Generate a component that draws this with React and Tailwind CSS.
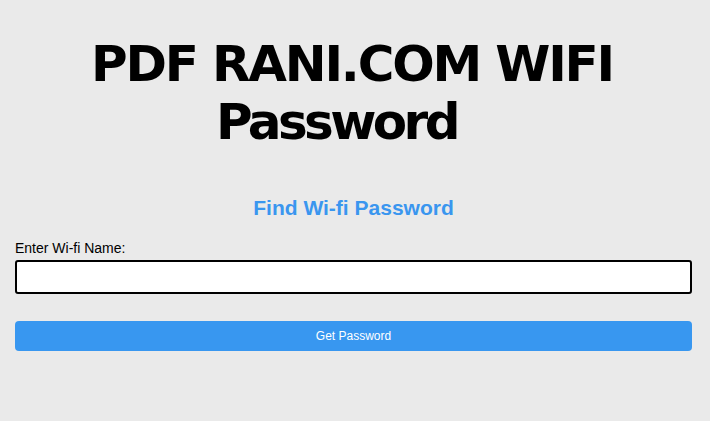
import React, { useState } from 'react';

export default function App() {
  const [name, setName] = useState('');

  return (
    <div className="min-h-[421px] w-full bg-[#eaeaea] px-[15px] pr-[18px] pt-[35px] font-['Liberation_Sans',Arial,sans-serif]">
      <h1 className="text-center font-['DejaVu_Sans',Verdana,sans-serif] text-[50px] font-bold leading-[58px] tracking-[-2.2px] text-black">
        <span className="mr-[3px]">PDF RANI.COM WIFI</span>
        <br />
        <span className="mr-[34px] tracking-[-3.6px]">Password</span>
      </h1>

      <h2 className="mt-[45px] text-center text-[21px] font-bold leading-[23px] text-[#3a96ef]">
        Find Wi-fi Password
      </h2>

      <label className="mt-[21px] block text-[14px] leading-[16px] text-black">
        Enter Wi-fi Name:
      </label>
      <input
        type="text"
        value={name}
        onChange={(e) => setName(e.target.value)}
        className="mt-[4px] block h-[34px] w-full rounded-[3px] border-2 border-black bg-white px-2 text-[14px] outline-none"
      />

      <button className="mt-[27px] block h-[30px] w-full rounded-[4px] bg-[#3897f0] text-[12px] text-white">
        Get Password
      </button>
    </div>
  );
}
